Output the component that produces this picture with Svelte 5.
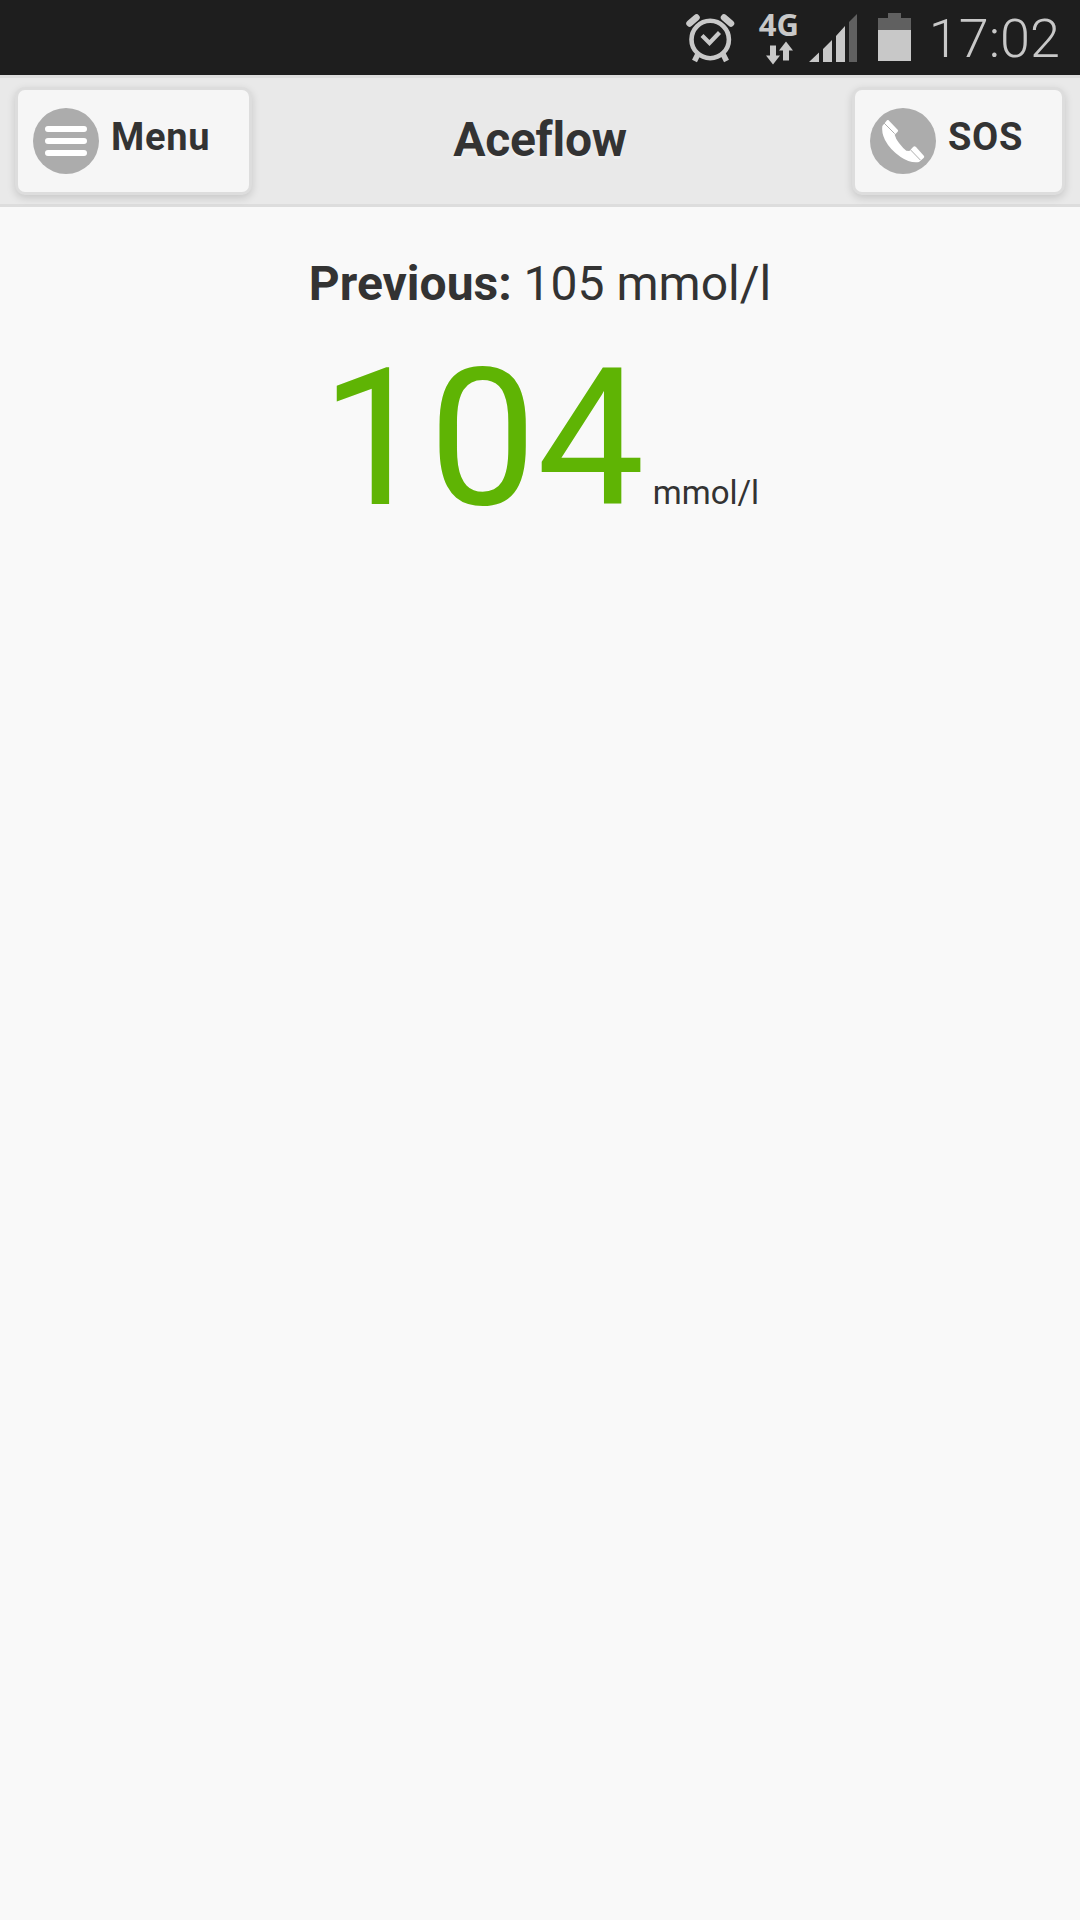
<script lang="ts">
	let time = $state('17:02');
	let previous = $state(105);
	let current = $state(104);
	const unit = 'mmol/l';
</script>

<div class="screen">
	<div class="status-bar">
		<svg class="alarm" viewBox="0 0 50 50" width="50" height="50">
			<g fill="none" stroke="#c8c8c8">
				<circle cx="24.2" cy="26.5" r="18.7" stroke-width="4.6" />
				<path d="M16 22.5L23.5 30L33.5 19.5" stroke-width="4.2" />
				<path d="M12 41L8.5 48M37 41L40.5 48" stroke-width="5.5" />
				<path d="M3.5 10.5L10.5 4.5M45 10.5L38 4.5" stroke-width="6.5" stroke-linecap="round" />
			</g>
		</svg>
		<div class="network">
			<span class="network-label">4G</span>
			<svg class="arrows" viewBox="0 0 28 24" width="28" height="24">
				<path fill="#c8c8c8" d="M4 4.5h6v10h4L7 23.5L0 14.5h4zM17 19.5h6V9.5h4L20 0.5L13 9.5h4z" />
			</svg>
		</div>
		<svg class="signal" viewBox="0 0 48 48" width="48" height="48">
			<path fill="#c8c8c8" d="M0 48L10 38.5V48zM14 48V35L23 26V48zM27 48V22L36 12V48z" />
			<path fill="#606060" d="M40 48V8L48 0V48z" />
		</svg>
		<svg class="battery" viewBox="0 0 33 48" width="33" height="48">
			<path fill="#606060" d="M10 0h13v5h10v12H0V5h10z" />
			<path fill="#c8c8c8" d="M0 17h33v31H0z" />
		</svg>
		<span class="clock">{time}</span>
	</div>

	<header>
		<button class="btn btn-menu">
			<svg viewBox="0 0 66 66" width="66" height="66">
				<circle cx="33" cy="33" r="33" fill="#acacac" />
				<path d="M15 21h36M15 33h36M15 45h36" stroke="#fff" stroke-width="6" stroke-linecap="round" />
			</svg>
			<span>Menu</span>
		</button>
		<h1>Aceflow</h1>
		<button class="btn btn-sos">
			<svg viewBox="0 0 198 198" width="66" height="66">
				<circle cx="99" cy="99" r="99" fill="#acacac" />
				<path
					fill="#fff"
					d="M55 36L83 65Q86 68 83 71L74 80Q77 92 87 105Q99 121 109 128L118 129L130 116Q134 113 138 117L162 144Q164 147 161 150L147 162Q120 166 92 147Q60 125 45 96Q34 74 37 54L51 37Q53 35 55 36z"
				/>
				<path d="M43 46L74 77M121 125L151 156" stroke="#777" stroke-width="1.8" />
			</svg>
			<span>SOS</span>
		</button>
	</header>

	<main>
		<p class="previous"><strong>Previous:</strong> {previous} {unit}</p>
		<p class="current"><span class="value">{current}</span> <span class="unit">{unit}</span></p>
	</main>
</div>

<style>
	:global(body) {
		background: #f9f9f9;
	}

	.screen {
		min-height: 1920px;
		font-family: Roboto, sans-serif;
		color: #333;
		background: #f9f9f9;
	}

	.status-bar {
		box-sizing: border-box;
		display: flex;
		justify-content: flex-end;
		height: 75px;
		padding: 13px 20px 0 0;
		background: #1e1e1e;
		color: #c8c8c8;
	}

	.alarm {
		margin-right: 23px;
	}

	.network {
		display: flex;
		flex-direction: column;
		align-items: center;
		width: 40px;
		margin-right: 10px;
	}

	.network-label {
		height: 28px;
		font: bold 31px/23px 'Open Sans', sans-serif;
	}

	.arrows {
		margin-left: 3px;
	}

	.signal {
		margin: 1px 21px 0 0;
	}

	.battery {
		margin-right: 18px;
	}

	.clock {
		font-size: 54px;
		font-weight: 300;
		line-height: 52px;
	}

	header {
		box-sizing: border-box;
		display: grid;
		grid-template-columns: 237px 1fr 237px;
		align-items: start;
		height: 132px;
		padding: 9px 15px 0;
		background: #e9e9e9;
		border-top: 3px solid #ddd;
		border-bottom: 3px solid #ddd;
	}

	h1 {
		margin: 0;
		font-size: 48px;
		font-variant-ligatures: none;
		letter-spacing: -0.3px;
		line-height: 105px;
		text-align: center;
		text-shadow: 0 3px 0 #f0f0f0;
	}

	.btn {
		box-sizing: border-box;
		display: flex;
		align-items: flex-start;
		gap: 12px;
		height: 108px;
		padding: 18px 15px;
		border: 3px solid #ddd;
		border-radius: 10px;
		background: #f6f6f6;
		box-shadow: 0 3px 9px rgba(0, 0, 0, 0.15);
		color: #333;
		font: bold 38px/58px Roboto, sans-serif;
		letter-spacing: 0.7px;
	}

	.btn-menu {
		width: 237px;
	}

	.btn-sos {
		justify-self: end;
		width: 213px;
	}

	main {
		padding-top: 49px;
		text-align: center;
	}

	p {
		margin: 0;
	}

	.previous {
		font-size: 48px;
		line-height: 56px;
	}

	.current {
		margin-top: 14px;
		font-size: 33px;
		line-height: 225px;
	}

	.value {
		color: #5fb404;
		font-size: 192px;
	}
</style>
